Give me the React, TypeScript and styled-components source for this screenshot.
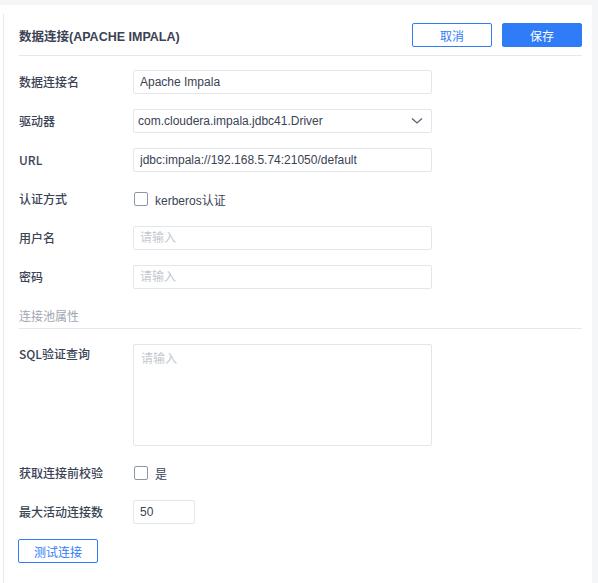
import React, { FC } from 'react';

import styled, { createGlobalStyle, css } from 'styled-components';

const GlobalStyle = createGlobalStyle`
  html, body {
    margin: 0;
    padding: 0;
    background: #f5f6f8;
  }

  body {
    font-family: "Liberation Sans", "Noto Sans CJK SC", sans-serif;
    font-size: 12px;
    color: #333a47;
  }
`;

const Page = styled.div`
  padding: 5px 6px 0 0;
`;

const Panel = styled.div`
  background: #fff;
  padding: 9px 0 0 3px;
  min-height: 569px;
`;

const Inner = styled.div`
  border-left: 1px solid #e6e8ec;
  padding: 0 10px 20px 15px;
`;

const Header = styled.div`
  display: flex;
  align-items: center;
  justify-content: space-between;
  padding: 9px 0 8px;
  border-bottom: 1px solid #e5e7eb;
`;

const Title = styled.span`
  font-size: 12.5px;
  font-weight: 700;
  color: #3a4354;
`;

const Actions = styled.div`
  display: flex;
  gap: 10px;
`;

const Button = styled.button<{ primary?: boolean }>`
  width: 80px;
  height: 24px;
  border-radius: 2px;
  border: 1px solid #2f7cf6;
  background: #fff;
  color: #2f7cf6;
  font-family: inherit;
  font-size: 12px;
  padding: 0;
  cursor: pointer;

  ${props =>
    props.primary &&
    css`
      background: #2f7cf6;
      color: #fff;
    `}
`;

const Form = styled.div`
  display: flex;
  flex-direction: column;
  padding-top: 14px;
`;

const Row = styled.div<{ top?: boolean }>`
  display: flex;
  align-items: ${props => (props.top ? 'flex-start' : 'center')};
  min-height: 24px;
  margin-top: 15px;

  &:first-child {
    margin-top: 0;
  }
`;

const Label = styled.label`
  width: 114px;
  flex-shrink: 0;
  line-height: 20px;
  font-family: "Noto Sans CJK SC", "Liberation Sans", sans-serif;
  font-size: 12px;
  font-weight: 500;
  color: #3a4354;
`;

const fieldBase = css`
  box-sizing: border-box;
  border: 1px solid #e3e6ea;
  border-radius: 2px;
  background: #fff;
  font-family: inherit;
  font-size: 12px;
  color: #3a4354;
  outline: none;

  &::placeholder {
    color: #c3c7cf;
  }
`;

const Input = styled.input<{ narrow?: boolean }>`
  ${fieldBase};
  width: ${props => (props.narrow ? '62px' : '299px')};
  height: 24px;
  padding: 0 6px;
`;

const TextArea = styled.textarea`
  ${fieldBase};
  width: 299px;
  height: 102px;
  padding: 6px 7px;
  resize: none;
  line-height: 16px;
`;

const Select = styled.div`
  ${fieldBase};
  width: 299px;
  height: 24px;
  display: flex;
  align-items: center;
  justify-content: space-between;
  padding: 0 8px 0 4px;
`;

const Check = styled.label`
  display: flex;
  align-items: center;
  gap: 7px;
  color: #3a4354;
  cursor: pointer;
`;

const Box = styled.span`
  box-sizing: border-box;
  width: 14px;
  height: 14px;
  margin-left: 1px;
  border: 1px solid #8f97a6;
  border-radius: 2px;
  background: #fff;
`;

const Section = styled.div`
  margin-top: 18px;
  padding-bottom: 1px;
  line-height: 20px;
  color: #a0a6b1;
  border-bottom: 1px solid #e5e7eb;
`;

const TestRow = styled.div`
  margin-top: 15px;
  margin-left: -1px;
`;

const Chevron: FC = () => (
  <svg width="12" height="8" viewBox="0 0 12 8" fill="none">
    <path d="M1 1.5L6 6L11 1.5" stroke="#5a6478" strokeWidth="1.3" />
  </svg>
);

const App: FC = () => (
  <Page>
    <GlobalStyle />
    <Panel>
      <Inner>
        <Header>
          <Title>数据连接(APACHE IMPALA)</Title>
          <Actions>
            <Button>取消</Button>
            <Button primary>保存</Button>
          </Actions>
        </Header>
        <Form>
          <Row>
            <Label>数据连接名</Label>
            <Input defaultValue="Apache Impala" />
          </Row>
          <Row>
            <Label>驱动器</Label>
            <Select>
              <span>com.cloudera.impala.jdbc41.Driver</span>
              <Chevron />
            </Select>
          </Row>
          <Row>
            <Label>URL</Label>
            <Input defaultValue="jdbc:impala://192.168.5.74:21050/default" />
          </Row>
          <Row>
            <Label>认证方式</Label>
            <Check>
              <Box />
              kerberos认证
            </Check>
          </Row>
          <Row>
            <Label>用户名</Label>
            <Input placeholder="请输入" />
          </Row>
          <Row>
            <Label>密码</Label>
            <Input type="password" placeholder="请输入" />
          </Row>
          <Section>连接池属性</Section>
          <Row top>
            <Label>SQL验证查询</Label>
            <TextArea placeholder="请输入" />
          </Row>
          <Row>
            <Label>获取连接前校验</Label>
            <Check>
              <Box />
              是
            </Check>
          </Row>
          <Row>
            <Label>最大活动连接数</Label>
            <Input narrow defaultValue="50" />
          </Row>
          <TestRow>
            <Button>测试连接</Button>
          </TestRow>
        </Form>
      </Inner>
    </Panel>
  </Page>
);

export default App;
